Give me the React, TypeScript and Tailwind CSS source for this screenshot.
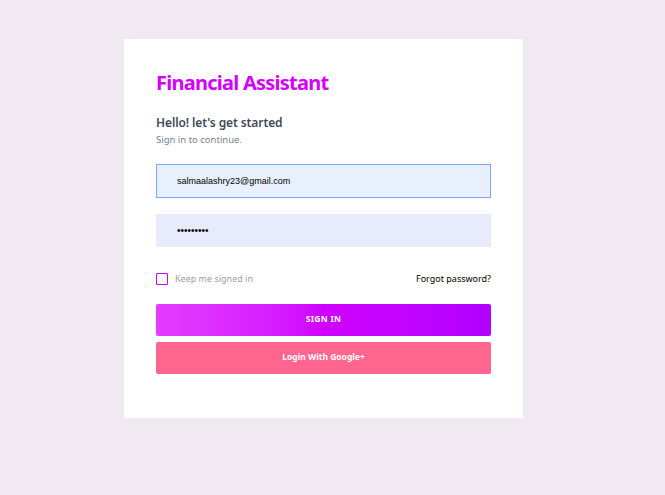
import React from "react";

const App = () => {
  const [email, setEmail] = React.useState("salmaalashry23@gmail.com");
  const [password, setPassword] = React.useState("123456789");
  const [keep, setKeep] = React.useState(false);

  return (
    <div className="min-h-[495px] bg-[#f1e9f2] pt-[39px] font-['Noto_Sans',sans-serif]">
      <div className="ml-[124px] w-[399px] h-[379px] bg-white px-8 pt-[30px]">
        <h1 className="text-[20px] font-bold leading-[28px] text-[#d400ff] tracking-[-0.75px]">
          Financial Assistant
        </h1>
        <h4 className="mt-[17px] text-[12px] font-semibold leading-[18px] text-[#3e4b5b] tracking-[-0.1px]">
          Hello! let's get started
        </h4>
        <p className="mt-[1px] text-[9.5px] leading-[14px] text-[#76838f]">
          Sign in to continue.
        </p>
        <form className="mt-[17px]" onSubmit={(e) => e.preventDefault()}>
          <input
            type="email"
            value={email}
            onChange={(e) => setEmail(e.target.value)}
            className="block w-full h-[34px] bg-[#e8effd] border border-[#7ea6fb] pl-5 text-[9px] text-black font-['Liberation_Sans',sans-serif] outline-none"
          />
          <input
            type="password"
            value={password}
            onChange={(e) => setPassword(e.target.value)}
            className="block w-full h-[33px] mt-[16px] bg-[#e8ebfb] border border-[#e8ebf5] pl-5 text-[10px] text-black font-['Liberation_Sans',sans-serif] outline-none"
          />
          <div className="flex items-center justify-between mt-[25px]">
            <label className="flex items-center gap-[7px] cursor-pointer">
              <input
                type="checkbox"
                checked={keep}
                onChange={() => setKeep(!keep)}
                className="appearance-none w-[12px] h-[12px] border border-[#c800ff] rounded-[1px] bg-white"
              />
              <span className="text-[9px] text-[#9c9fa6]">Keep me signed in</span>
            </label>
            <a href="#" className="text-[9px] text-black">
              Forgot password?
            </a>
          </div>
          <button
            type="submit"
            className="mt-[18px] w-full h-[32px] rounded-[2px] bg-linear-to-r from-[#e43bff] via-[#d000ff] to-[#b100ff] text-white text-[8.5px] font-bold tracking-[0.3px]"
          >
            SIGN IN
          </button>
          <button
            type="button"
            className="mt-[6px] w-full h-[32px] rounded-[2px] bg-[#ff658e] text-white text-[8.5px] font-bold"
          >
            Login With Google+
          </button>
        </form>
      </div>
    </div>
  );
};

export default App;
